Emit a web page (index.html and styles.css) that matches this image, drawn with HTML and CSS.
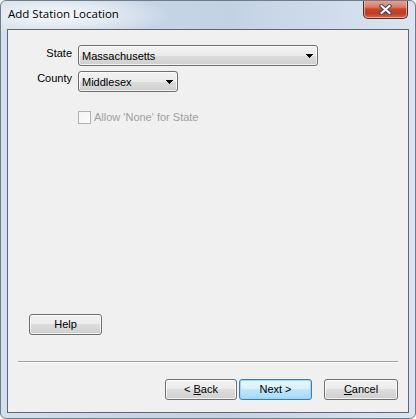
FILE: index.html
```html
<!DOCTYPE html>
<html>
<head>
<meta charset="utf-8">
<title>Add Station Location</title>
<link rel="stylesheet" href="styles.css">
</head>
<body>
<div class="window">
  <div class="titlebar">
    <span class="title">Add Station Location</span>
    <button class="close" aria-label="Close">
      <svg width="13" height="11" viewBox="0 0 13 11">
        <path d="M2.5 2 L10.5 9 M10.5 2 L2.5 9" stroke="#3b4a5c" stroke-width="4" stroke-linecap="square" fill="none"/>
        <path d="M2.5 2 L10.5 9 M10.5 2 L2.5 9" stroke="#ffffff" stroke-width="2" stroke-linecap="square" fill="none"/>
      </svg>
    </button>
  </div>
  <div class="client">
    <div class="form">
      <span class="lbl lbl-state">State</span>
      <div class="combo combo-state">
        <span class="combo-text">Massachusetts</span>
        <svg class="arrow" width="7" height="4" viewBox="0 0 7 4" shape-rendering="crispEdges"><rect x="0" y="0" width="7" height="1"/><rect x="1" y="1" width="5" height="1"/><rect x="2" y="2" width="3" height="1"/><rect x="3" y="3" width="1" height="1"/></svg>
      </div>
      <span class="lbl lbl-county">County</span>
      <div class="combo combo-county">
        <span class="combo-text">Middlesex</span>
        <svg class="arrow" width="7" height="4" viewBox="0 0 7 4" shape-rendering="crispEdges"><rect x="0" y="0" width="7" height="1"/><rect x="1" y="1" width="5" height="1"/><rect x="2" y="2" width="3" height="1"/><rect x="3" y="3" width="1" height="1"/></svg>
      </div>
    </div>
    <div class="check">
      <span class="box"></span>
      <span class="check-text">Allow 'None' for State</span>
    </div>
    <button class="btn help">Help</button>
    <div class="sep"></div>
    <div class="actions">
      <button class="btn back">&lt; <u>B</u>ack</button>
      <button class="btn next">Next &gt;</button>
      <button class="btn cancel"><u>C</u>ancel</button>
    </div>
  </div>
</div>
</body>
</html>
```
FILE: styles.css
```css
html, body {
  margin: 0;
  padding: 0;
  background: #ffffff;
}

body {
  width: 416px;
  height: 419px;
  overflow: hidden;
  font-family: "Liberation Sans", Arial, sans-serif;
  font-size: 11px;
  color: #000;
}

.window {
  box-sizing: border-box;
  width: 416px;
  height: 419px;
  border: 1px solid #6f7c8a;
  border-radius: 6px;
  background:
    radial-gradient(ellipse 110px 22px at 60px 14px, rgba(255,255,255,0.85), rgba(255,255,255,0) 100%),
    linear-gradient(to right, #d3dfec 0%, #c6d5e5 35%, #c3d2e3 55%, #d0dceb 80%, #dae5f1 100%);
  display: flex;
  flex-direction: column;
  overflow: hidden;
}

.titlebar {
  height: 28px;
  display: flex;
  align-items: flex-start;
  flex: none;
}

.title {
  font-family: "Open Sans", "Liberation Sans", sans-serif;
  font-size: 11.5px;
  line-height: 16px;
  padding: 5px 0 0 7px;
  color: #000;
}

.close {
  margin: -1px 7px 0 auto;
  width: 45px;
  height: 19px;
  border: 1px solid #5b2a24;
  border-top: none;
  border-radius: 0 0 5px 5px;
  background: linear-gradient(to bottom, #e8a898 0%, #d97a66 40%, #c7452e 50%, #c13a22 75%, #d46a4e 100%);
  box-shadow: inset 0 0 0 1px rgba(255,220,210,0.55);
  padding: 0;
  display: flex;
  align-items: center;
  justify-content: center;
}

.close svg {
  display: block;
  margin-top: 1px;
}

.client {
  box-sizing: border-box;
  margin: 0 6px;
  height: 384px;
  border: 1px solid #5f6670;
  background: #f0f0f0;
  padding: 15px 10px 12px 10px;
  display: flex;
  flex-direction: column;
  flex: none;
}

.form {
  display: grid;
  grid-template-columns: 54px auto;
  column-gap: 6px;
  row-gap: 5px;
  justify-items: start;
}

.lbl {
  justify-self: end;
  line-height: 13px;
}

.lbl-state {
  padding-top: 2px;
}

.lbl-county {
  padding-top: 1px;
}

.combo {
  box-sizing: border-box;
  height: 21px;
  border: 1px solid #707070;
  border-radius: 3px;
  background: linear-gradient(to bottom, #f2f2f2 0%, #ebebeb 50%, #dddddd 50%, #cfcfcf 100%);
  box-shadow: inset 0 0 0 1px rgba(255,255,255,0.7);
  display: flex;
  align-items: center;
  padding: 0 4px 0 3px;
}

.combo-state {
  width: 240px;
}

.combo-county {
  width: 100px;
}

.combo-text {
  flex: 1;
  line-height: 13px;
  padding-top: 2px;
}

.arrow {
  display: block;
  fill: #000;
  margin-top: 0;
}

.check {
  margin-top: 19px;
  margin-left: 60px;
  display: flex;
  align-items: center;
  height: 13px;
  color: #a0a0a0;
}

.box {
  box-sizing: border-box;
  width: 13px;
  height: 13px;
  border: 1px solid #b1b1b1;
  background: linear-gradient(to bottom right, #f4f4f4, #fbfbfb);
  margin-right: 3px;
}

.check-text {
  line-height: 13px;
}

.btn {
  box-sizing: border-box;
  height: 21px;
  width: 73px;
  padding: 0;
  border: 1px solid #707070;
  border-radius: 3px;
  background: linear-gradient(to bottom, #f2f2f2 0%, #ebebeb 50%, #dddddd 50%, #cfcfcf 100%);
  box-shadow: inset 0 0 0 1px rgba(255,255,255,0.75);
  font-family: "Liberation Sans", Arial, sans-serif;
  font-size: 11px;
  color: #000;
  line-height: 13px;
}

.btn u {
  text-decoration: underline;
  text-underline-offset: 1px;
}

.help {
  margin-top: auto;
  margin-left: 11px;
}

.sep {
  margin-top: 26px;
  height: 0;
  border-top: 1px solid #a0a0a0;
  border-bottom: 1px solid #ffffff;
}

.actions {
  margin-top: 16px;
  display: flex;
  justify-content: flex-end;
}

.back {
  width: 72px;
}

.next {
  margin-left: 2px;
  border-color: #3c7fb1;
  background: linear-gradient(to bottom, #eaf6fd 0%, #d9f0fc 50%, #bee6fd 50%, #a7d9f5 100%);
  box-shadow: inset 0 0 0 1px #8fdcf8;
}

.cancel {
  width: 74px;
  margin-left: 12px;
}
```
